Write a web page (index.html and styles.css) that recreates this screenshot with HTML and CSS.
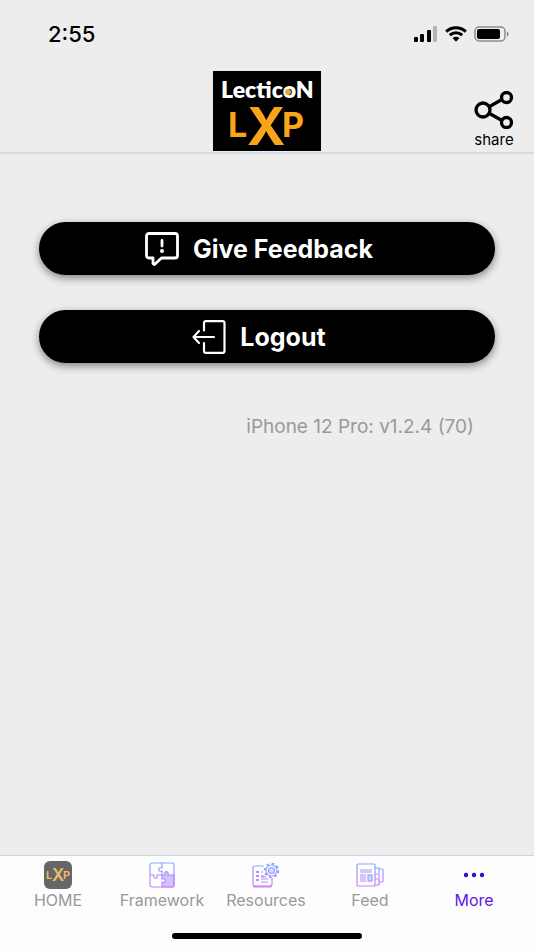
FILE: index.html
```html
<!DOCTYPE html>
<html lang="en">
<head>
<meta charset="UTF-8">
<meta name="viewport" content="width=device-width, initial-scale=1">
<title>Lecticon LXP - More</title>
<link rel="stylesheet" href="styles.css">
</head>
<body>

<div class="status-bar">
  <span class="time">2:55</span>
  <div class="status-icons">
    <svg width="24" height="16" viewBox="0 0 24 16">
      <rect x="0" y="11" width="4" height="5" rx="1"/>
      <rect x="6" y="8" width="4" height="8" rx="1"/>
      <rect x="13" y="4" width="4" height="12" rx="1"/>
      <rect x="19" y="0" width="4" height="16" rx="1" fill="#b4b4b4"/>
    </svg>
    <svg width="22" height="16" viewBox="0 0 22 16">
      <path d="M1.2 5.6C6.5.3 15.5.3 20.8 5.6M4.8 9.2C8.3 5.9 13.7 5.9 17.2 9.2" fill="none" stroke="#000" stroke-width="3"/>
      <path d="M7.5 12C9.6 10.2 12.4 10.2 14.5 12L11 15.8Z"/>
    </svg>
    <svg width="35" height="16" viewBox="0 0 35 16">
      <rect x="1" y="1" width="30" height="14" rx="4" fill="none" stroke="#8c8c8c" stroke-width="1.5"/>
      <rect x="3" y="3" width="23" height="10" rx="2"/>
      <path d="M33 5.5C35 6.5 35 9.5 33 10.5Z" fill="#777"/>
    </svg>
  </div>
</div>

<header class="header">
  <svg class="logo" width="108" height="80" viewBox="0 0 108 80" role="img" aria-label="Lecticon LXP">
    <rect width="108" height="80"/>
    <text class="wordmark" x="8" y="27">LecticoN</text>
    <circle cx="75" cy="21" r="3" fill="#f9a51a"/>
    <text class="lxp" x="15" y="66">L<tspan class="big-x" x="34" y="74">X</tspan><tspan x="69" y="66">P</tspan></text>
  </svg>
  <button class="share" type="button">
    <svg width="40" height="38" viewBox="0 0 40 38" fill="none" stroke="#000" stroke-width="3.3">
      <path d="M15.5 15.5L27.5 8.8M15.5 22.5L28 29.5"/>
      <circle cx="9" cy="19" r="7"/>
      <circle cx="32.5" cy="6.5" r="5"/>
      <circle cx="32.5" cy="31.5" r="5"/>
    </svg>
    <span>share</span>
  </button>
</header>

<main class="content">
  <button class="action" type="button">
    <svg width="34" height="34" viewBox="0 0 34 34" fill="none" stroke="#fff" stroke-width="2.8" stroke-linejoin="round" stroke-linecap="round">
      <path d="M4 1.5H30Q32.5 1.5 32.5 4V23.5Q32.5 26 30 26H16.5L9.5 32.5L8 31.5V26H4Q1.5 26 1.5 23.5V4Q1.5 1.5 4 1.5Z"/>
      <path d="M17 8.5V14"/>
      <circle cx="17" cy="19" r="2" fill="#fff" stroke="none"/>
    </svg>
    Give Feedback
  </button>
  <button class="action" type="button">
    <svg width="34" height="34" viewBox="0 0 34 34" fill="none" stroke="#fff" stroke-width="2.2" stroke-linejoin="round" stroke-linecap="round">
      <path d="M12 10.5V3Q12 1.2 14 1.2H30.5Q32.5 1.2 32.5 3V31Q32.5 32.8 30.5 32.8H14Q12 32.8 12 31V23"/>
      <path d="M22 17H1.5M7 11L1.5 17L7 23"/>
    </svg>
    Logout
  </button>
  <p class="version">iPhone 12 Pro: v1.2.4 (70)</p>
</main>

<nav class="tabs">
  <a href="#home">
    <svg width="28" height="28" viewBox="0 0 28 28">
      <rect width="28" height="28" rx="6" fill="#666"/>
      <text class="home-mark" x="2" y="18">L<tspan class="home-x" x="8" y="20">X</tspan><tspan x="19" y="18">P</tspan></text>
    </svg>
    HOME
  </a>
  <a href="#framework">
    <svg width="28" height="28" viewBox="0 0 28 28" fill="none" stroke="url(#tint)" stroke-width="1.2">
      <defs>
        <linearGradient id="tint" gradientUnits="userSpaceOnUse" x1="0" y1="2" x2="0" y2="26">
          <stop offset="0" stop-color="#80aaff"/>
          <stop offset="1" stop-color="#d47cf5"/>
        </linearGradient>
      </defs>
      <path d="M14 14H17C15.5 9.5 21.5 9.5 20 14H26V24Q26 26 24 26H14V21C18.5 22.5 18.5 16.5 14 18Z" fill="#cfc4fb"/>
      <rect x="2" y="2" width="24" height="24" rx="2"/>
      <path d="M14 2V7C9.5 5.5 9.5 11.5 14 10V14M2 14H6C4.5 18.5 10.5 18.5 9 14H14"/>
    </svg>
    Framework
  </a>
  <a href="#resources">
    <svg width="28" height="28" viewBox="0 0 28 28" fill="none" stroke="url(#tint)" stroke-width="1.2">
      <path d="M12 5H3Q1 5 1 7V23Q1 25 3 25H18Q20 25 20 23V17M2 24V26H19V24"/>
      <path d="M4 11H7M4 15H7M4 19H7" stroke-width="2.2"/>
      <path d="M9 11H11M9 15H12M9 18H16M9 21H16M9 16H14"/>
      <circle cx="19.5" cy="9.5" r="5.5"/>
      <circle cx="19.5" cy="9.5" r="3" fill="#c3e6ff"/>
      <circle cx="19.5" cy="9.5" r="6.8" stroke-width="2" stroke-dasharray="2.4 2.94"/>
    </svg>
    Resources
  </a>
  <a href="#feed">
    <svg width="28" height="28" viewBox="0 0 28 28" fill="none" stroke="url(#tint)" stroke-width="1.2">
      <rect x="1" y="3" width="18" height="22" rx="1"/>
      <path d="M19 7H23V24H19M23 8H26Q27 8 27 9V20Q27 21 26 21H23M19 13H22M19 18H22"/>
      <path d="M4 9H16M4 11H16M4 14H10M4 16H10M4 18H10M4 20H10"/>
      <rect x="12" y="14" width="4" height="6" fill="#bde8fb"/>
    </svg>
    Feed
  </a>
  <a class="active" href="#more" aria-current="page">
    <svg width="28" height="28" viewBox="0 0 28 28" fill="#2b10d0">
      <circle cx="6" cy="14" r="2.2"/>
      <circle cx="14" cy="14" r="2.2"/>
      <circle cx="22" cy="14" r="2.2"/>
    </svg>
    More
  </a>
</nav>
<div class="home-indicator"></div>

</body>
</html>
```
FILE: styles.css
```css
* {
  box-sizing: border-box;
}
body {
  display: flex;
  flex-direction: column;
  min-height: 100vh;
  margin: 0;
  background-color: #ededed;
  font-family: Inter, "Liberation Sans", sans-serif;
  color: #000;
}
button {
  font-family: inherit;
  border: none;
  cursor: pointer;
}
svg {
  display: block;
  flex-shrink: 0;
}

/* status bar */
.status-bar {
  display: flex;
  justify-content: space-between;
  align-items: center;
  height: 68px;
  padding: 0 25px 0 48px;
}
.time {
  font-size: 22px;
  font-weight: 500;
}
.status-icons {
  display: flex;
  gap: 7px;
}

/* header */
.header {
  display: grid;
  grid-template-columns: 1fr auto 1fr;
  align-items: end;
  padding: 3px 20px 1px;
  border-bottom: 2px solid #d3dde9;
}
.logo {
  grid-column: 2;
}
.wordmark {
  font-size: 23px;
  font-weight: 800;
  font-family: Lato, sans-serif;
  fill: #fff;
}
.lxp {
  font-size: 34px;
  font-weight: 700;
  fill: #f9a51a;
}
.big-x {
  font-size: 52px;
}
.share {
  display: flex;
  flex-direction: column;
  align-items: center;
  justify-self: end;
  padding: 0;
  background: none;
  color: #000;
  font-size: 15px;
  line-height: 22px;
}

/* page */
.content {
  flex: 1;
  display: flex;
  flex-direction: column;
  gap: 35px;
  padding: 68px 39px;
}
.action {
  display: flex;
  justify-content: center;
  align-items: center;
  gap: 14px;
  height: 53px;
  padding: 0 16px 0 0;
  border-radius: 27px;
  background-color: #000;
  color: #fff;
  font-size: 25px;
  font-weight: 700;
  box-shadow: 0 3px 8px rgba(0, 0, 0, 0.45);
}
.version {
  margin: 17px 21px 0 0;
  text-align: right;
  font-size: 19px;
  line-height: 24px;
  color: #999;
}

/* bottom tabs */
.tabs {
  display: grid;
  grid-template-columns: repeat(5, 1fr);
  padding: 5px 8px 0 6px;
  border-top: 1px solid #ccd6e6;
  background-color: #fdfdfd;
}
.tabs a {
  display: flex;
  flex-direction: column;
  align-items: center;
  color: #999;
  font-size: 16px;
  line-height: 22px;
  text-decoration: none;
}
.tabs .active {
  color: #6315e8;
}
.home-mark {
  font-size: 11px;
  font-weight: 600;
  fill: #efbd68;
}
.home-x {
  font-size: 17px;
}
.home-indicator {
  padding: 22px 0 11px;
  background-color: #fdfdfd;
}
.home-indicator::before {
  content: "";
  display: block;
  width: 190px;
  height: 6px;
  margin: 0 auto;
  border-radius: 3px;
  background-color: #000;
}
```
